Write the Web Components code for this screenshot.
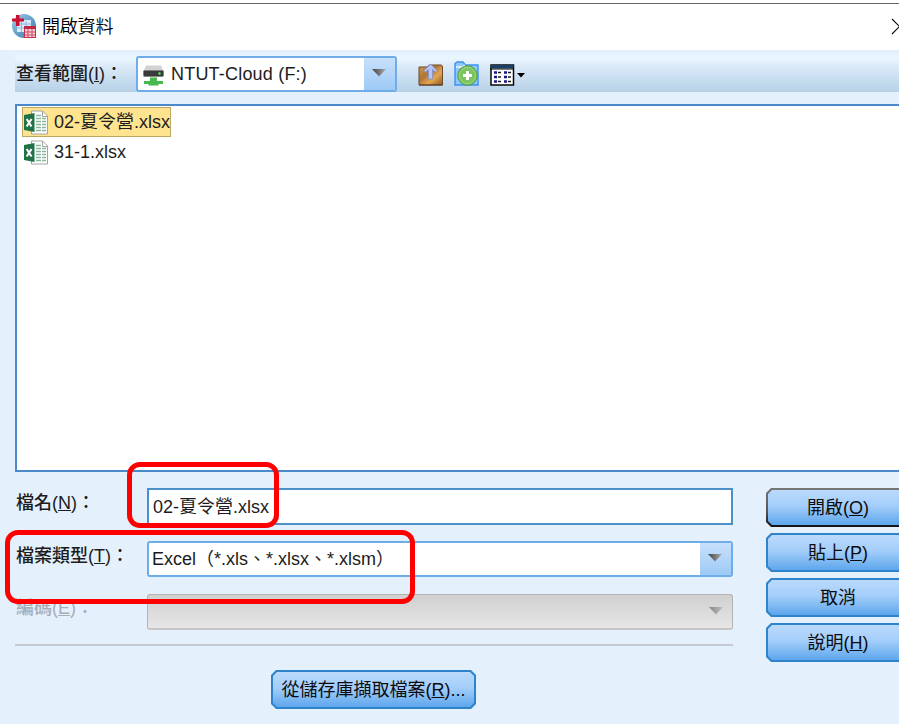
<!DOCTYPE html>
<html lang="zh-Hant">
<head>
<meta charset="utf-8">
<title>開啟資料</title>
<style>
html,body{margin:0;height:100%;overflow:hidden;background:#e4f1fd}
body{font:18px/24px "Liberation Sans","Noto Sans CJK TC",sans-serif;color:#1c1c20}
</style>
</head>
<body>
<open-dialog></open-dialog>
<script>
const define = (name, html) => {
  const t = document.createElement('template');
  t.innerHTML = html;
  customElements.define(name, class extends HTMLElement {
    constructor() {
      super();
      this.attachShadow({mode: 'open'}).append(t.content.cloneNode(true));
    }
  });
};

define('app-icon', `<style>:host{display:block;width:24px;height:24px}svg{display:block}</style>
<svg width="24" height="24" viewBox="0 0 24 24"><defs><linearGradient id="g" x2="1" y2="1"><stop stop-color="#9fc8e8"/><stop offset="1" stop-color="#347aae"/></linearGradient></defs>
<circle cx="12" cy="12" r="12" fill="url(#g)"/><path d="M5 6H19V18H5Z" fill="#d9eaf8"/><path d="M5 10H19M5 14H19M9.500 7V18M14 7V18" stroke="#8db9dd"/>
<path d="M4 1H7.500V4.500H12V7.500H7.500V12H4V7.500H0V4.500H4Z" fill="#cc1034"/><rect x="12.500" y="12.500" width="11" height="11" fill="#f5cfd7" stroke="#c3304c"/><path d="M12.500 13.500H24" stroke="#c32542" stroke-width="3"/><path d="M13 18H23M13 21H23M16 15V23M20 15V23" stroke="#cf4b63"/></svg>`);

define('drive-icon', `<style>:host{display:block;width:21px;height:21px}svg{display:block}</style>
<svg width="21" height="21" viewBox="0 0 21 21"><path d="M3 .5H18L20.500 6H.5Z" fill="#d2d2d2"/><rect x=".5" y="5.500" width="20" height="6" rx="1" fill="#37393a" stroke="#777" stroke-width=".6"/><circle cx="16.500" cy="8.500" r="1.200" fill="#55ee66"/><path d="M7 12.500H14V16H20V19H15.500V20.500H5.500V19H1V16H7Z" fill="#47b94e"/></svg>`);

define('excel-icon', `<style>:host{display:block;width:25px;height:25px}svg{display:block}</style>
<svg width="25" height="25" viewBox="0 0 25 25"><path d="M7.500 1H18.500L23.500 6V24H7.500Z" fill="#fff" stroke="#a3a3a3"/><path d="M18.500 1V6.500H24" fill="none" stroke="#a3a3a3"/><path d="M12 5.500H17M12 8.500H17M12 11.500H17M12 14.500H17M12 17.500H17M12 20.500H17M18 8.500H22M18 11.500H22M18 14.500H22M18 17.500H22M18 20.500H22" stroke="#86b69c" stroke-width="1.500"/><path d="M0 5 10.500 3V22L0 20Z" fill="#217346"/><path d="M2.700 9 7.500 16.500M7.500 9 2.700 16.500" stroke="#fff" stroke-width="2.100"/></svg>`);

define('up-icon', `<style>:host{display:block;width:26px;height:26px}svg{display:block}</style>
<svg width="26" height="26" viewBox="0 0 26 26"><defs><linearGradient id="g" x2="1" y2="1"><stop stop-color="#d09a55"/><stop offset=".4" stop-color="#ad7638"/><stop offset=".65" stop-color="#e5a750"/><stop offset="1" stop-color="#8c5521"/></linearGradient></defs>
<path d="M1 6H9L11 4H23L24.500 5V24H1Z" fill="url(#g)" stroke="#6b492a"/><path d="M1 24H24.500" stroke="#5a3b22"/><path d="M12.500 3 19 9.500 17.500 11 14.500 8.500V18H10.500V8.500L7.500 11 6 9.500Z" fill="#b3c7fa" stroke="#8291d0" stroke-width=".8"/></svg>`);

define('new-folder-icon', `<style>:host{display:block;width:25px;height:26px}svg{display:block}</style>
<svg width="25" height="26" viewBox="0 0 25 26"><path d="M1 5V2.500L3 1H9L11.500 4H24V24H1Z" fill="#8fc8ff" stroke="#3d91f4" stroke-width="1.400"/><path d="M2 6H8L11 4" fill="none" stroke="#eef7ff" stroke-width="1.500"/><circle cx="13.500" cy="14.500" r="9.800" fill="#65b44d" stroke="#5aa349"/><circle cx="13.500" cy="14.500" r="8.300" fill="#7bc45f" stroke="#b5e0a0" stroke-width=".8"/><path d="M13.500 10V19M9 14.500H18" stroke="#fff" stroke-width="3"/></svg>`);

define('view-icon', `<style>:host{display:block;width:35px;height:22px}svg{display:block}</style>
<svg width="35" height="22" viewBox="0 0 35 22"><rect x="1" y="1" width="22.500" height="20" fill="#fff" stroke="#080808" stroke-width="1.500"/><rect x="1" y="1" width="22.500" height="3.500" fill="#173f67"/><path d="M0 5H24" stroke="#000"/><path d="M4 8.500H7M4 13H7M4 17.500H7M14 8.500H17M14 13H17M14 17.500H17" stroke="#17178c" stroke-width="2.700"/><path d="M8 8.500H11M8 13H11M8 17.500H11M18 8.500H21M18 13H21M18 17.500H21" stroke="#181818" stroke-width="1.300"/><path d="M27 9H35L31 13.500Z" fill="#000"/></svg>`);

define('title-bar', `<style>:host{display:flex;align-items:center;box-sizing:border-box;height:50px;padding:2px 0 0 12px;background:linear-gradient(#fff 3px,#696969 3px,#696969 4px,#fff 4px);font-family:"Noto Sans CJK TC",sans-serif;font-weight:350;color:#000;letter-spacing:-.2px}
span{margin:-3px 0 0 6px;flex:1}svg{display:block;flex:none;margin-right:-9px}</style><app-icon></app-icon><span><slot></slot></span>
<svg width="17" height="17" viewBox="0 0 17 17"><path d="M1 1 16 16M16 1 1 16" stroke="#111" stroke-width="1.200"/></svg>`);

define('select-box', `<style>:host{display:flex;box-sizing:border-box;height:36px;border:2px solid #6fade8;border-radius:3px;background:#fff;overflow:hidden}
.v{flex:1;display:flex;align-items:center;padding-left:var(--pad,3px);white-space:nowrap}.b{width:31px;display:flex;align-items:center;justify-content:center;background:linear-gradient(#c8e0fb,#9dcaf6)}
svg{display:block;margin-right:2px;margin-top:-2px}
:host([disabled]){border:1px solid #b4b4b4;border-bottom-width:2px;border-bottom-color:#c6c6c6;background:linear-gradient(#d0d0d0,#e6e6e6)}:host([disabled]) .b{background:none}:host([disabled]) svg{opacity:.55}</style>
<div class="v"><slot></slot></div><div class="b"><svg width="14" height="8"><defs><linearGradient id="a" x2="1"><stop stop-color="#444"/><stop offset="1" stop-color="#aaa"/></linearGradient></defs><path d="M0 0H14L7 7.500Z" fill="url(#a)"/></svg></div>`);

define('text-box', `<style>:host{display:flex;align-items:center;box-sizing:border-box;height:37px;border:2px solid #4b90c9;padding-left:4px;background:#fff;white-space:nowrap}</style><slot></slot>`);

define('push-button', `<style>:host{display:block;box-sizing:border-box;height:39px;padding:2px;background:#2f83cb;clip-path:polygon(5px 0,calc(100% - 5px) 0,100% 5px,100% calc(100% - 5px),calc(100% - 5px) 100%,5px 100%,0 calc(100% - 5px),0 5px)}
:host([default]){background:linear-gradient(#777,#555 60%,#111)}
div{display:flex;align-items:center;justify-content:center;height:100%;background:linear-gradient(#bbdafc,#a4cefa 45%,#5da6ec);color:#0c0c10;white-space:nowrap;clip-path:polygon(4px 0,calc(100% - 4px) 0,100% 4px,100% calc(100% - 4px),calc(100% - 4px) 100%,4px 100%,0 calc(100% - 4px),0 4px)}</style><div><span><slot></slot></span></div>`);

define('file-item', `<style>:host{display:flex;align-items:center;box-sizing:border-box;height:30px;width:max-content;padding-left:1px;border:1px solid transparent;white-space:nowrap}:host([selected]){background:#ffe48f;border-color:#bca764}span{margin-left:5px}</style><excel-icon></excel-icon><span><slot></slot></span>`);

define('mark-box', `<style>:host{position:absolute;box-sizing:border-box;border:5px solid #fe0000;border-radius:13px;pointer-events:none}</style>`);

define('open-dialog', `<style>
:host{display:block;width:899px;height:724px;position:relative;overflow:hidden;background:#e4f1fd}
.bar{height:42px;margin-left:15px;display:flex;align-items:flex-start;background:linear-gradient(#e2effb,#eaf6ff 8px,#d9e8f6 18px,#b6d1e8)}
label{white-space:nowrap;display:block;box-sizing:border-box;padding-left:1px;font-weight:500}
.bar label{width:121px;padding-top:12px}
.bar select-box{width:261px;margin-top:6px;--pad:5px;letter-spacing:.2px}
.bar drive-icon{margin:3px 7px 0 0}
.icons{display:flex;margin:11px 0 0 21px}.icons new-folder-icon{margin-left:10px}.icons view-icon{margin:3px 0 0 11px}
.list{box-sizing:border-box;height:368px;margin:12px -2px 0 15px;border:2px solid #4a8ac8;padding:1px 0 0 5px;background:#fff}
.form{display:grid;grid-template-columns:132px 586px 146px;column-gap:0;margin:16px 0 0 15px}
.fields{grid-column:1/3;display:grid;grid-template-columns:132px 586px;grid-template-rows:53px 53px 51px;align-items:start;border-bottom:2px solid #c6cad0;height:156px}
.fields label{padding-top:3px}
.btns{display:grid;gap:6px;margin-left:33px;width:144px}
.fields .off{color:#a6aeb5;padding-top:2px}
.fetch{width:205px;margin:8px 0 0 271px}
.m1{left:127px;top:462px;width:152px;height:66px}.m2{left:5px;top:530px;width:410px;height:74px}
</style>
<title-bar>開啟資料</title-bar>
<div class="bar"><label>查看範圍(<u>I</u>)：</label><select-box><drive-icon></drive-icon>NTUT-Cloud (F:)</select-box><div class="icons"><up-icon></up-icon><new-folder-icon></new-folder-icon><view-icon></view-icon></div></div>
<div class="list"><file-item selected>02-夏令營.xlsx</file-item><file-item>31-1.xlsx</file-item></div>
<div class="form"><div class="fields">
<label>檔名(<u>N</u>)：</label><text-box>02-夏令營.xlsx</text-box>
<label>檔案類型(<u>T</u>)：</label><select-box>Excel（*.xls、*.xlsx、*.xlsm）</select-box>
<label class="off">編碼(<u>E</u>)：</label><select-box disabled></select-box>
</div><div class="btns"><push-button default>開啟(<u>O</u>)</push-button><push-button>貼上(<u>P</u>)</push-button><push-button>取消</push-button><push-button>說明(<u>H</u>)</push-button></div></div>
<push-button class="fetch">從儲存庫擷取檔案(<u>R</u>)...</push-button>
<mark-box class="m1"></mark-box><mark-box class="m2"></mark-box>`);
</script>
</body>
</html>
